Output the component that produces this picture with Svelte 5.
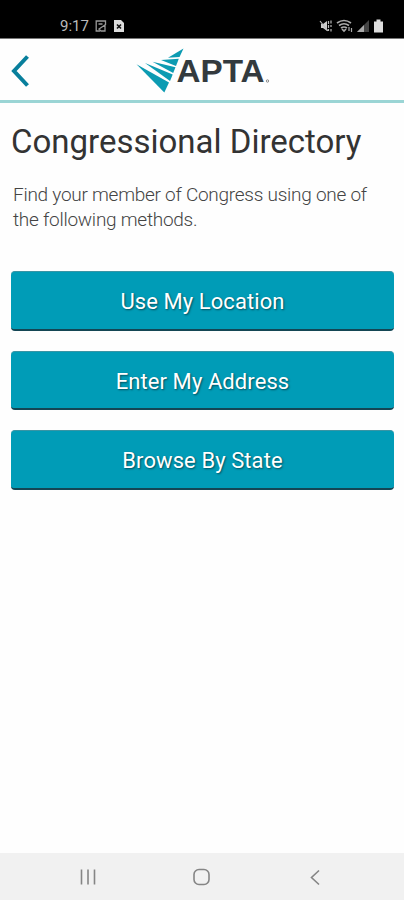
<script>
  // Methods for looking up a member of Congress
  let methods = ["Use My Location", "Enter My Address", "Browse By State"];
</script>

<div class="screen">
  <div class="status-bar">
    <div class="status-left">
      <span class="time">9:17</span>
      <svg width="12" height="14" viewBox="0 0 12 14" fill="none" stroke="#999" stroke-width="1.3">
        <path d="M5 12H1.200V2h9.300v4" />
        <path d="M3.500 5h4M4 10l6-4v6H6z" />
      </svg>
      <svg width="12" height="14" viewBox="0 0 12 14">
        <path d="M1 1h7l3 3v9H1z" fill="#ddd" />
        <path d="M4 5.500l4 4M8 5.500l-4 4" stroke="#111" stroke-width="1.600" />
      </svg>
    </div>
    <div class="status-right">
      <svg width="14" height="14" viewBox="0 0 14 14">
        <path d="M3 5h2l4-3v10L5 9H3z" fill="#ccc" />
        <path d="M2 2l8 10M10.500 2v3M10.500 6v3M10.500 10v2M13 1.500v3M13 6v2M13 10v2.500" stroke="#bbb" stroke-width="1.2" />
      </svg>
      <svg width="17" height="14" viewBox="0 0 17 14" fill="none" stroke="#aaa" stroke-width="1.7">
        <path d="M1 4q7-5 14 0M3 6.500q5-3.500 10 0M5 9q3-2 6 0" />
        <path d="M6 10l2 2 2-2" />
        <path d="M13 8v4M15.500 9v4" stroke-width="1.200" />
      </svg>
      <svg width="13" height="14" viewBox="0 0 13 14">
        <path d="M0 13L12 1v12z" fill="#444" />
        <path d="M0 13L7 6v7z" fill="#aaa" />
      </svg>
      <svg width="9" height="14" viewBox="0 0 9 14">
        <path d="M2.500 0.500h4v2H9v11H0v-11h2.500z" fill="#ddd" />
      </svg>
    </div>
  </div>

  <header>
    <button class="back" aria-label="Back">
      <svg width="20" height="34" viewBox="0 0 20 34" fill="none" stroke="#087f9c" stroke-width="4">
        <path d="M16.500 2.500L3 17l13.500 14.500" />
      </svg>
    </button>
    <svg class="logo" width="136" height="50" viewBox="0 0 136 50">
      <g fill="#0c9bb2">
        <path d="M47.500 2.500L32 11.800l11.500-.8z" />
        <path d="M25 14l17.800-1.200-2.800 7.200z" />
        <path d="M16.500 15.800l23 5.400-2.300 5.800z" />
        <path d="M9 17l27.700 11.500-2.700 6.500z" />
        <path d="M0.500 18.300l32.500 18.200-4.700 10z" />
      </g>
      <text x="40.500" y="36.300" class="wordmark" textLength="88" lengthAdjust="spacingAndGlyphs">APTA</text>
      <circle cx="131.500" cy="35" r="1.200" fill="none" stroke="#888" stroke-width="1" />
    </svg>
  </header>

  <main>
    <h1>Congressional Directory</h1>
    <p>Find your member of Congress using one of the following methods.</p>
    <div class="methods">
      {#each methods as method}
        <button class="method">{method}</button>
      {/each}
    </div>
  </main>

  <nav>
    <svg width="18" height="18" viewBox="0 0 18 18" stroke="#858585" stroke-width="1.6">
      <path d="M2.500 1.500v15M9 1.500v15M15.500 1.500v15" />
    </svg>
    <svg width="18" height="18" viewBox="0 0 18 18" fill="none" stroke="#858585" stroke-width="1.6">
      <rect x="1" y="1.500" width="15" height="15" rx="5" />
    </svg>
    <svg width="18" height="18" viewBox="0 0 18 18" fill="none" stroke="#858585" stroke-width="1.6">
      <path d="M13 2.500L5.500 9.500l7.500 7" />
    </svg>
  </nav>
</div>

<style>
  :global(body) {
    margin: 0;
    background: #fefefe;
  }
  .screen {
    display: flex;
    flex-direction: column;
    height: 900px;
    font-family: Roboto, sans-serif;
    color: #333;
  }
  .status-bar {
    display: flex;
    justify-content: space-between;
    height: 39px;
    box-sizing: border-box;
    padding: 13px 21px 0 60px;
    background: #000;
    border-bottom: 1px solid #777;
  }
  .status-left,
  .status-right {
    display: flex;
    align-items: center;
    height: 26px;
  }
  .status-left {
    gap: 6px;
  }
  .status-right {
    gap: 4px;
  }
  .time {
    color: #bbb;
    font-size: 15px;
  }
  header {
    display: flex;
    height: 64px;
    box-sizing: border-box;
    border-bottom: 3px solid #9bd5d5;
  }
  .back {
    display: flex;
    width: 136px;
    padding: 15px 0 0 11px;
    border: 0;
    background: none;
  }
  .logo {
    margin-top: 7px;
  }
  .wordmark {
    font-family: "Liberation Sans", sans-serif;
    font-size: 31px;
    font-weight: 700;
    fill: #333a3e;
  }
  main {
    flex: 1;
    padding: 18px 10px 0 11px;
  }
  h1 {
    margin: 0;
    font-size: 33px;
    font-weight: 400;
    line-height: 41px;
    white-space: nowrap;
  }
  p {
    margin: 20px 0 0 2px;
    color: #444;
    font-size: 19px;
    font-weight: 300;
    line-height: 25px;
    letter-spacing: -0.260px;
  }
  .methods {
    display: flex;
    flex-direction: column;
    gap: 20px;
    margin-top: 39px;
  }
  .method {
    height: 59.500px;
    padding: 3px 0 0;
    border: 0;
    border-top: 1px solid #3994a4;
    border-bottom: 2px solid #144654;
    border-radius: 4px;
    background: #009cb7;
    color: #fff;
    font-family: inherit;
    font-size: 22px;
    letter-spacing: 0.080px;
    text-shadow: 1px 1px 2px rgba(0, 0, 0, 0.5);
  }
  nav {
    display: flex;
    justify-content: space-between;
    align-items: center;
    height: 47px;
    padding: 0 80px 0 79px;
    background: #f1f1f1;
  }
</style>
